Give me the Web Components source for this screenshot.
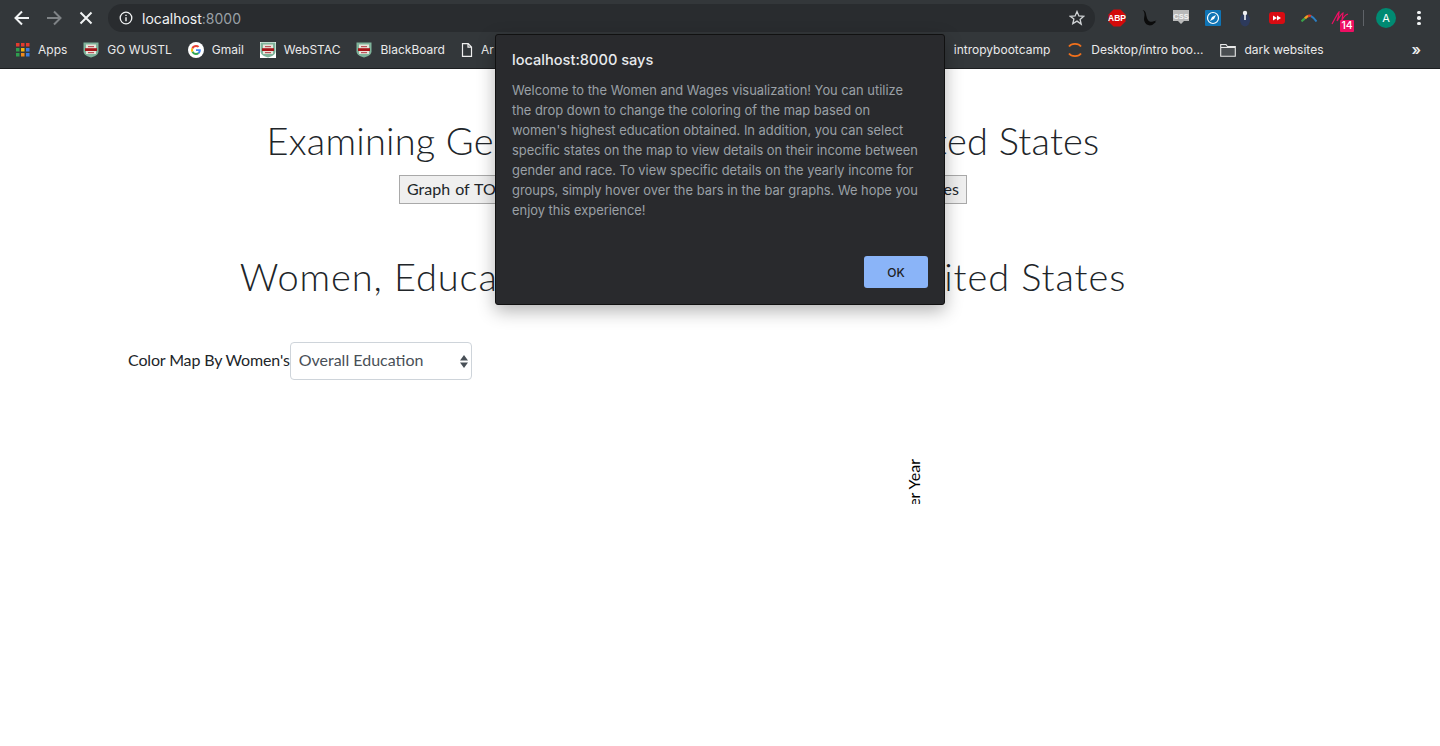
<!DOCTYPE html>
<html lang="en">
<head>
<meta charset="utf-8">
<title>Women and Wages</title>
<style>
  html, body { margin: 0; height: 100%; background: #fff; overflow: hidden; }
  body { display: flex; flex-direction: column; }
</style>
</head>
<body>
<browser-toolbar></browser-toolbar>
<bookmark-bar>
  <book-mark label="Apps"><svg viewBox="0 0 14 14" width="14" height="14"><rect x="0" y="0" width="3.500" height="3.500" fill="#e33b2e"/><rect x="5" y="0" width="3.500" height="3.500" fill="#e33b2e"/><rect x="10" y="0" width="3.500" height="3.500" fill="#e33b2e"/><rect x="0" y="5" width="3.500" height="3.500" fill="#2f9e4f"/><rect x="5" y="5" width="3.500" height="3.500" fill="#f3b50f"/><rect x="10" y="5" width="3.500" height="3.500" fill="#3b7de0"/><rect x="0" y="10" width="3.500" height="3.500" fill="#2f9e4f"/><rect x="5" y="10" width="3.500" height="3.500" fill="#f08a1c"/><rect x="10" y="10" width="3.500" height="3.500" fill="#3b7de0"/></svg></book-mark>
  <book-mark label="GO WUSTL"><wustl-crest></wustl-crest></book-mark>
  <book-mark label="Gmail"><svg viewBox="0 0 16 16" width="16" height="16"><circle cx="8" cy="8" r="8" fill="#fff"/><path d="M12.8 8.2c0-.4 0-.7-.1-1H8v1.900h2.700c-.1.6-.5 1.200-1 1.500l1.500 1.200c.9-.8 1.600-2.100 1.600-3.600z" fill="#4285f4"/><path d="M8 13c1.300 0 2.400-.4 3.200-1.200l-1.500-1.200c-.4.3-1 .5-1.700.5-1.300 0-2.400-.9-2.800-2l-1.600 1.200C4.400 11.900 6.100 13 8 13z" fill="#34a853"/><path d="M5.200 9.100c-.2-.7-.2-1.500 0-2.200L3.600 5.700c-.7 1.400-.7 3.100 0 4.600z" fill="#fbbc05"/><path d="M8 4.900c.7 0 1.400.3 1.900.7l1.400-1.400C10.400 3.400 9.300 3 8 3 6.100 3 4.400 4.100 3.600 5.700l1.600 1.200c.4-1.100 1.500-2 2.800-2z" fill="#ea4335"/></svg></book-mark>
  <book-mark label="WebSTAC"><wustl-crest square></wustl-crest></book-mark>
  <book-mark label="BlackBoard"><wustl-crest></wustl-crest></book-mark>
  <book-mark label="Ar"><svg viewBox="0 0 12 14" width="12" height="14"><path d="M1.500.7h5.700l3.300 3.300v9.300h-9zM7 .7v3.500h3.500" fill="none" stroke="#eee" stroke-width="1.200"/></svg></book-mark>
  <span class="gap" style="flex:0 0 444px"></span>
  <book-mark label="intropybootcamp"></book-mark>
  <book-mark label="Desktop/intro boo..." style="margin-left:1px"><svg viewBox="0 0 16 16" width="16" height="16"><path d="M2 4.500C4.500 1 11.500 1 14 4.500M2 11.500C4.500 15 11.500 15 14 11.500" fill="none" stroke="#f2711c" stroke-width="1.800"/></svg></book-mark>
  <book-mark label="dark websites" style="margin-left:1px"><svg viewBox="0 0 16 14" width="16" height="14"><path d="M.7 1.500h5.300l1.500 2h7.800v9.800H.7z M.7 4.500h14.600" fill="#4a4e51" stroke="#e8e8e8" stroke-width="1.100"/></svg></book-mark>
  <span class="more">&raquo;</span>
</bookmark-bar>
<web-page>
  <h-title>Examining Gender and Wages in the United States</h-title>
  <graph-button>Graph of TOTAL Incomes Between Genders and Races over the United States</graph-button>
  <h-title class="second">Women, Education, and Wages in the United States</h-title>
  <map-controls></map-controls>
  <axis-label></axis-label>
</web-page>
<alert-dialog origin="localhost:8000 says">Welcome to the Women and Wages visualization! You can utilize the drop down to change the coloring of the map based on women's highest education obtained. In addition, you can select specific states on the map to view details on their income between gender and race. To view specific details on the yearly income for groups, simply hover over the bars in the bar graphs. We hope you enjoy this experience!</alert-dialog>

<script>
const PAGE_FONT = "Lato, 'Open Sans', sans-serif";
const UI_FONT = "Inter, Roboto, 'Liberation Sans', sans-serif";

class BrowserToolbar extends HTMLElement {
  constructor() {
    super();
    this.attachShadow({mode: 'open'}).innerHTML = `
      <style>
        :host { display: flex; align-items: center; height: 36px; background: #33373a; font-family: ${UI_FONT}; box-sizing: border-box; }
        .nav { display: flex; align-items: center; width: 108px; flex: none; }
        .nav svg { display: block; }
        .back { margin-left: 14px; }
        .fwd { margin-left: 16px; }
        .stop { margin-left: 17px; }
        .omni { flex: 0 0 987px; height: 28px; border-radius: 14px; background: #292c2f; display: flex; align-items: center; padding: 0 10px 0 11px; box-sizing: border-box; color: #fff; }
        .url { margin-left: 9px; font-size: 14px; font-weight: 400; color: #f1f3f4; }
        .url span { color: #9aa0a6; }
        .star { margin-left: auto; }
        .ext { display: flex; align-items: center; flex: 1; height: 36px; }
        .ext > * { flex: none; }
        .i { display: flex; width: 32px; justify-content: center; }
        .first { margin-left: 6px; }
        .m { position: relative; }
        .badge { position: absolute; left: 15px; top: 9px; width: 14px; text-align: center; background: #ee0f63; color: #fff; font: 500 10.500px/12px ${UI_FONT}; border-radius: 1px; }
        .div { width: 1px; height: 16px; background: #5f6368; margin-left: 6px; }
        .avatar { width: 20px; height: 20px; border-radius: 50%; background: #008a72; color: #fff; font-size: 11px; line-height: 20px; text-align: center; margin-left: 12px; }
        .kebab { margin-left: 21px; width: 4px; display: grid; gap: 2px; }
        .kebab i { width: 3.500px; height: 3.500px; border-radius: 50%; background: #f1f3f4; display: block; }
      </style>
      <div class="nav">
        <svg class="back" width="16" height="16" viewBox="0 0 16 16"><path d="M15 8H2M8 1.500 1.500 8 8 14.500" fill="none" stroke="#f1f3f4" stroke-width="2"/></svg>
        <svg class="fwd" width="16" height="16" viewBox="0 0 16 16"><path d="M1 8h13M8 1.500 14.500 8 8 14.500" fill="none" stroke="#7f8386" stroke-width="2"/></svg>
        <svg class="stop" width="14" height="14" viewBox="0 0 14 14"><path d="M1.500 1.500l11 11M12.500 1.500l-11 11" fill="none" stroke="#f1f3f4" stroke-width="2"/></svg>
      </div>
      <div class="omni">
        <svg width="14" height="14" viewBox="0 0 14 14"><circle cx="7" cy="7" r="5.800" fill="none" stroke="#f1f3f4" stroke-width="1.300"/><path d="M7 6.200v4M7 3.700v1.300" stroke="#f1f3f4" stroke-width="1.400"/></svg>
        <div class="url">localhost<span>:8000</span></div>
        <svg class="star" width="16" height="16" viewBox="0 0 16 16"><path d="M8 1.500l1.900 4.400 4.800.4-3.600 3.100 1.100 4.700L8 11.100l-4.200 2.500 1.100-4.700L1.300 6.300l4.800-.4z" fill="none" stroke="#d0d3d5" stroke-width="1.300"/></svg>
      </div>
      <div class="ext">
        <div class="i first"><svg width="18" height="18" viewBox="0 0 18 18"><path d="M5.500.5h7l5 5v7l-5 5h-7l-5-5v-7z" fill="#d20a0a"/><text x="9" y="12" font-size="8.500" font-weight="700" fill="#fff" text-anchor="middle" font-family="Liberation Sans">ABP</text></svg></div>
        <div class="i"><svg width="18" height="18" viewBox="0 0 18 18"><path d="M2.500 1C5 1.500 5.500 3 6 5c.4 2 .8 4 1.800 5.800 1 1.700 2.600 2.300 4.200 2l4.500-1.300-1.500 1.500.8.300c-1.500.7-2.500 2.500-4.500 3C8 17 5.200 15 4.300 12c-.8-2.500.4-4.500.2-7C4.400 3.500 3.800 2 2.500 1z" fill="#0b0b0b"/></svg></div>
        <div class="i"><svg width="18" height="18" viewBox="0 0 18 18"><path d="M1 1h16v11h-5l-3 3-3-3H1z" fill="#b9b9b9"/><text x="9" y="9.500" font-size="7.500" font-weight="700" fill="#f4f4f4" text-anchor="middle" font-family="Liberation Sans">CSS</text></svg></div>
        <div class="i"><svg width="16" height="16" viewBox="0 0 16 16"><rect width="16" height="16" rx="1" fill="#0f74b5"/><circle cx="8" cy="8" r="5.500" fill="none" stroke="#fff" stroke-width="1.200"/><path d="M11 5 9 9 5 11l2-4z" fill="#fff"/></svg></div>
        <div class="i"><svg width="14" height="18" viewBox="0 0 14 18"><ellipse cx="7" cy="11" rx="5" ry="6.500" fill="#2d3a5c"/><circle cx="7" cy="4" r="2.200" fill="#eef0f4"/><rect x="6.200" y="5" width="1.600" height="6" fill="#eef0f4"/></svg></div>
        <div class="i"><svg width="16" height="12" viewBox="0 0 16 12"><rect width="16" height="12" rx="3" fill="#d90b12"/><path d="M4 3.500 8 6 4 8.500zM8 3.500 12 6 8 8.500z" fill="#fff"/></svg></div>
        <div class="i"><svg width="16" height="8" viewBox="0 0 16 8"><path d="M.5 7.500C1.500 6.200 2.500 5.300 4 4.500" fill="none" stroke="#3aa34a" stroke-width="2"/><path d="M4 4.500C5 3 6 2.200 7.500 2" fill="none" stroke="#f0a020" stroke-width="2.500"/><path d="M7 2c1-.5 2-.5 3 .2" fill="none" stroke="#e0392b" stroke-width="2.500"/><path d="M10 2.200c2 1 4 3 5.500 5.300" fill="none" stroke="#2b7fc3" stroke-width="2"/></svg></div>
        <div class="i m"><svg width="20" height="14" viewBox="0 0 20 14"><path d="M1 13C4 8 6 3 8 1c0 3-1 6-2 9 2-3 4-7 6-8 0 2-1 5-1 7 1-2 3-5 6-6" fill="none" stroke="#ee0f63" stroke-width="1.200"/></svg><span class="badge">14</span></div>
        <div class="div"></div>
        <div class="avatar">A</div>
        <div class="kebab"><i></i><i></i><i></i></div>
      </div>`;
  }
}

class BookmarkBar extends HTMLElement {
  constructor() {
    super();
    this.attachShadow({mode: 'open'}).innerHTML = `
      <style>
        :host { display: flex; align-items: center; height: 33px; padding: 0 19px 5px 8px; box-sizing: border-box; background: #33373a; border-bottom: 1px solid #1c1e20; color: #eee; font: 12px ${UI_FONT}; }
        ::slotted(.more) { margin-left: auto; font-size: 15px; font-weight: 600; color: #eee; }
      </style>
      <slot></slot>`;
  }
}

class BookMark extends HTMLElement {
  constructor() {
    super();
    this.attachShadow({mode: 'open'}).innerHTML = `
      <style>
        :host { display: inline-flex; align-items: center; gap: 8px; padding: 0 8px; white-space: nowrap; font: 12px ${UI_FONT}; color: #eaeaea; }
        ::slotted(svg) { display: block; flex: none; }
      </style>
      <slot></slot><span class="t"></span>`;
  }
  connectedCallback() {
    this.shadowRoot.querySelector('.t').textContent = this.getAttribute('label');
  }
}

class WustlCrest extends HTMLElement {
  constructor() {
    super();
    this.attachShadow({mode: 'open'}).innerHTML = `
      <style>:host { display: block; flex: none; width: 16px; height: 16px; } svg { display: block; }</style>
      <svg viewBox="0 0 16 16" width="16" height="16"><rect class="bg" width="16" height="16" fill="none"/><path d="M.5.5h15v9c0 3-3.500 5-7.500 6-4-1-7.500-3-7.500-6z" fill="#7fb39a"/><rect x="3" y="2.500" width="10" height="9.500" fill="#e9e4da"/><path d="M2 6.200h12v2.800H2z" fill="#a51417"/><rect x="5" y="4" width="6" height="1.200" fill="#b8545a"/><rect x="5" y="10" width="6" height="1.200" fill="#b8545a"/></svg>`;
  }
  connectedCallback() {
    if (this.hasAttribute('square')) this.shadowRoot.querySelector('.bg').setAttribute('fill', '#fff');
  }
}

class WebPage extends HTMLElement {
  constructor() {
    super();
    this.attachShadow({mode: 'open'}).innerHTML = `
      <style>
        :host { display: flex; flex-direction: column; flex: 1; width: 1110px; margin-left: 113px; padding: 0 15px; background: #fff; font-family: ${PAGE_FONT}; color: #212529; min-height: 0; }
        ::slotted(.second) { margin-top: 49px; letter-spacing: 0.9px; }
      </style>
      <slot></slot>`;
  }
}

class HTitle extends HTMLElement {
  constructor() {
    super();
    this.attachShadow({mode: 'open'}).innerHTML = `
      <style>
        :host { display: block; text-align: center; font-size: 38px; font-weight: 300; line-height: 46px; white-space: nowrap; margin-top: 48px; letter-spacing: 0.2px; }
      </style>
      <slot></slot>`;
  }
}

class GraphButton extends HTMLElement {
  constructor() {
    super();
    this.attachShadow({mode: 'open'}).innerHTML = `
      <style>
        :host { display: block; width: 568px; height: 29px; margin: 12px auto 0; padding: 0 7px; box-sizing: border-box; border: 1px solid #a9a9a9; background: #efefef; font-size: 16px; line-height: 25px; color: #212529; text-align: justify; text-align-last: justify; white-space: nowrap; overflow: hidden; }
      </style>
      <slot></slot>`;
  }
}

class MapControls extends HTMLElement {
  constructor() {
    super();
    this.attachShadow({mode: 'open'}).innerHTML = `
      <style>
        :host { display: flex; align-items: center; height: 38px; margin-top: 43px; font-size: 16px; color: #212529; }
        .label { padding-bottom: 3px; letter-spacing: -0.15px; }
        .wrap { position: relative; width: 182px; height: 38px; }
        select { appearance: none; width: 100%; height: 100%; box-sizing: border-box; border: 1px solid #ced4da; border-radius: 4px; background: #fff; color: #495057; font: 16px ${PAGE_FONT}; padding: 0 8px 3px; }
        svg { position: absolute; right: 3px; top: 12px; pointer-events: none; }
      </style>
      <span class="label">Color Map By Women's</span>
      <div class="wrap">
        <select><option>Overall Education</option></select>
        <svg width="10" height="15" viewBox="0 0 10 15"><path d="M5 1 9 6.500H1zM5 14 1 8.500h8z" fill="#495057"/></svg>
      </div>`;
  }
}

class AxisLabel extends HTMLElement {
  constructor() {
    super();
    this.attachShadow({mode: 'open'}).innerHTML = `
      <style>
        :host { display: block; width: 40px; height: 80px; margin: 44px 0 0 760px; overflow: hidden; }
        svg { display: block; }
      </style>
      <svg width="40" height="80" viewBox="0 0 40 80">
        <text transform="translate(32 35) rotate(-90)" font-size="16" fill="#000" font-family="Lato, sans-serif" text-anchor="end">Income Per Year</text>
      </svg>`;
  }
}

class AlertDialog extends HTMLElement {
  constructor() {
    super();
    this.attachShadow({mode: 'open'}).innerHTML = `
      <style>
        :host { position: absolute; left: 495px; top: 34px; width: 450px; height: 271px; box-sizing: border-box; padding: 15px 16px 16px; background: #292a2d; border: 1px solid #111; border-radius: 3px; color: #9aa0a6; font-family: ${UI_FONT}; box-shadow: 0 6px 18px rgba(0,0,0,.3); display: flex; flex-direction: column; }
        .head { color: #e8eaed; font-size: 14.600px; font-weight: 500; line-height: 20px; }
        .body { margin-top: 11px; padding-right: 6px; font-size: 12.900px; line-height: 20px; }
        button { margin: auto 0 0 auto; width: 64px; height: 32px; border: 0; border-radius: 3px; background: #8ab4f8; color: #202124; font: 500 12px ${UI_FONT}; }
      </style>
      <div class="head"></div>
      <div class="body"><slot></slot></div>
      <button>OK</button>`;
  }
  connectedCallback() {
    this.shadowRoot.querySelector('.head').textContent = this.getAttribute('origin');
  }
}

customElements.define('browser-toolbar', BrowserToolbar);
customElements.define('bookmark-bar', BookmarkBar);
customElements.define('book-mark', BookMark);
customElements.define('wustl-crest', WustlCrest);
customElements.define('web-page', WebPage);
customElements.define('h-title', HTitle);
customElements.define('graph-button', GraphButton);
customElements.define('map-controls', MapControls);
customElements.define('axis-label', AxisLabel);
customElements.define('alert-dialog', AlertDialog);
</script>
</body>
</html>
